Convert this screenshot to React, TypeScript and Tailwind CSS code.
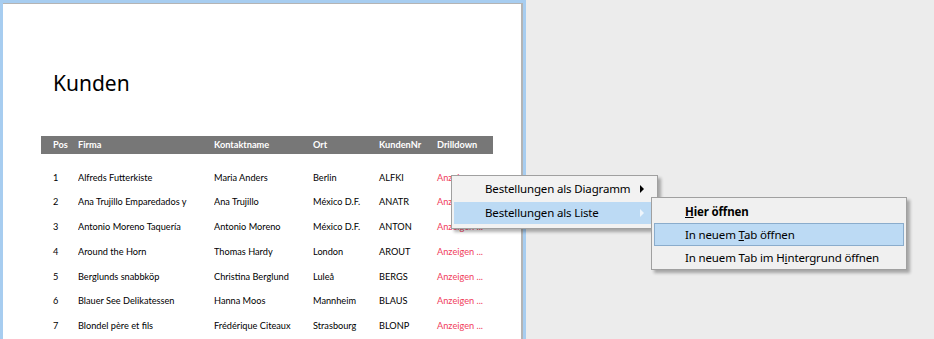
import React from "react";

const rows = [
  ["1", "Alfreds Futterkiste", "Maria Anders", "Berlin", "ALFKI"],
  ["2", "Ana Trujillo Emparedados y", "Ana Trujillo", "México D.F.", "ANATR"],
  ["3", "Antonio Moreno Taquería", "Antonio Moreno", "México D.F.", "ANTON"],
  ["4", "Around the Horn", "Thomas Hardy", "London", "AROUT"],
  ["5", "Berglunds snabbköp", "Christina Berglund", "Luleå", "BERGS"],
  ["6", "Blauer See Delikatessen", "Hanna Moos", "Mannheim", "BLAUS"],
  ["7", "Blondel père et fils", "Frédérique Citeaux", "Strasbourg", "BLONP"],
];

const cols = "grid grid-cols-[37px_136px_99px_66px_58px_56px]";

function Report() {
  return (
    <div className="w-[526px] h-full shrink-0 border-l-[3px] border-t-[3px] border-r-[3px] border-[#a7cdf0]">
      <div className="h-full bg-white border-t border-r-2 border-[#b4b4b4]">
        <div className="pt-[64px] pl-[50px] text-[21px] leading-[30px] text-black" style={{ fontFamily: '"Noto Sans", sans-serif' }}>
          Kunden
        </div>
        <div className="ml-[38px] mt-[38px] w-[452px]" style={{ fontFamily: "Lato, sans-serif" }}>
          <div className={`${cols} h-[18px] items-center bg-[#777777] text-white font-bold text-[9.2px]`}>
            <div className="pl-[12px]">Pos</div>
            <div>Firma</div>
            <div>Kontaktname</div>
            <div>Ort</div>
            <div>KundenNr</div>
            <div>Drilldown</div>
          </div>
          <div className="pt-[11px]">
            {rows.map((r) => (
              <div key={r[0]} className={`${cols} h-[24.8px] items-center text-[9.2px] text-black`}>
                <div className="pl-[12px]">{r[0]}</div>
                <div className="whitespace-nowrap overflow-hidden">{r[1]}</div>
                <div className="whitespace-nowrap overflow-hidden">{r[2]}</div>
                <div>{r[3]}</div>
                <div>{r[4]}</div>
                <div className="text-[#f0405c] whitespace-nowrap">Anzeigen ...</div>
              </div>
            ))}
          </div>
        </div>
      </div>
    </div>
  );
}

function Arrow({ light }: { light?: boolean }) {
  return (
    <svg width="5" height="8" viewBox="0 0 5 8" className="absolute right-[10px] top-[7px]">
      <path d="M0 0 L4 4 L0 8 Z" fill={light ? "#eef5fc" : "#000"} />
    </svg>
  );
}

export default function App() {
  return (
    <div className="relative w-[934px] h-[339px] overflow-hidden bg-[#ececec] flex">
      <Report />
      <div
        className="absolute left-[451px] top-[175px] w-[207px] bg-[#f2f2f2] border border-[#a0a0a0] px-[2px] pt-[2px] pb-[4px] shadow-[3px_3px_3px_rgba(0,0,0,0.3)] text-[11.5px] tracking-[-0.15px] text-black"
        style={{ fontFamily: '"Noto Sans", sans-serif' }}
      >
        <div className="relative h-[22px] leading-[22px] pl-[31px]">
          Bestellungen als Diagramm
          <Arrow />
        </div>
        <div className="relative h-[22px] leading-[22px] pl-[31px] mt-[2px] bg-[#bcdaf4]">
          Bestellungen als Liste
          <Arrow light />
        </div>
      </div>
      <div
        className="absolute left-[651px] top-[197px] w-[256px] bg-[#f0f0f0] border border-[#a0a0a0] px-[2px] pt-[2px] pb-[0px] shadow-[3px_3px_3px_rgba(0,0,0,0.3)] text-[11.5px] tracking-[-0.15px] text-black"
        style={{ fontFamily: '"Noto Sans", sans-serif' }}
      >
        <div className="h-[23px] leading-[23px] pl-[31px] font-bold">
          <span className="underline">H</span>ier öffnen
        </div>
        <div className="h-[23px] leading-[21px] pl-[30px] bg-[#bcdaf4] border border-[#8aaccc]">
          In neuem <span className="underline">T</span>ab öffnen
        </div>
        <div className="h-[23px] leading-[23px] pl-[31px]">
          In neuem Tab im H<span className="underline">i</span>ntergrund öffnen
        </div>
      </div>
    </div>
  );
}
